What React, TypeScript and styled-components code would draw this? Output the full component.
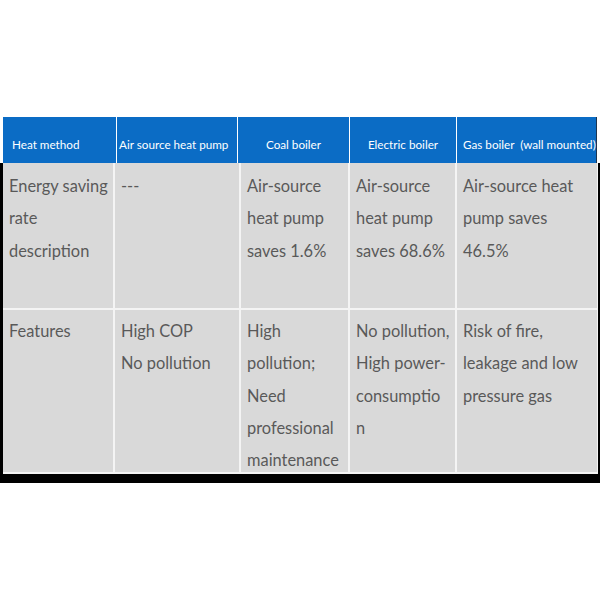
import React from "react";
import styled, { createGlobalStyle } from "styled-components";

const GlobalStyle = createGlobalStyle`
  html, body {
    margin: 0;
    padding: 0;
    background: #ffffff;
  }
  body {
    font-family: Lato, "Liberation Sans", sans-serif;
  }
`;

const Page = styled.div`
  width: 600px;
  height: 600px;
  padding-top: 117px;
  box-sizing: border-box;
`;

const HeaderRow = styled.div`
  display: grid;
  grid-template-columns: 113px 120px 111px 106px 139px;
  column-gap: 1px;
  margin-left: 3px;
  width: 594px;
  height: 46px;
  background: #ffffff;
  border-right: 2px solid #1d3550;
  box-sizing: border-box;
`;

const HeadCell = styled.div<{ $center?: boolean; $pad: number }>`
  background: #0b6cc5;
  color: #ffffff;
  font-size: 11.7px;
  display: flex;
  align-items: center;
  justify-content: ${(p) => (p.$center ? "center" : "flex-start")};
  padding: 7px 0 0 ${(p) => p.$pad}px;
  white-space: nowrap;
  overflow: hidden;
  box-sizing: border-box;
`;

const BodyFrame = styled.div`
  background: #000000;
  padding: 0 2px 9px 3px;
  width: 600px;
  box-sizing: border-box;
`;

const BodyGrid = styled.div`
  display: grid;
  grid-template-columns: 110px 124px 107px 105px 140px;
  grid-template-rows: 145px 162px;
  gap: 2px;
  padding-bottom: 2px;
  background: #f4f4f4;
`;

const Cell = styled.div<{ $top: number }>`
  background: #d9d9d9;
  color: #595959;
  font-size: 16.4px;
  line-height: 32.3px;
  padding: ${(p) => p.$top}px 0 0 6px;
  box-sizing: border-box;
  overflow: hidden;
`;

const Line = styled.div`
  white-space: nowrap;
`;

const headers = [
  { label: "Heat method", pad: 9 },
  { label: "Air source heat pump", pad: 2 },
  { label: "Coal boiler", pad: 0, center: true },
  { label: "Electric boiler", pad: 0, center: true },
  { label: "Gas boiler  (wall mounted)", pad: 6 },
];

const rows = [
  {
    top: 7,
    cells: [
      ["Energy saving", "rate", "description"],
      ["---"],
      ["Air-source", "heat pump", "saves 1.6%"],
      ["Air-source", "heat pump", "saves 68.6%"],
      ["Air-source heat", "pump saves", "46.5%"],
    ],
  },
  {
    top: 5,
    cells: [
      ["Features"],
      ["High COP", "No pollution"],
      ["High", "pollution;", "Need", "professional", "maintenance"],
      ["No pollution,", "High power-", "consumptio", "n"],
      ["Risk of fire,", "leakage and low", "pressure gas"],
    ],
  },
];

export default function App() {
  return (
    <>
      <GlobalStyle />
      <Page>
        <HeaderRow>
          {headers.map((h) => (
            <HeadCell key={h.label} $center={h.center} $pad={h.pad}>
              {h.label.replace(/ {2}/g, "\u00a0 ")}
            </HeadCell>
          ))}
        </HeaderRow>
        <BodyFrame>
          <BodyGrid>
            {rows.map((row, ri) =>
              row.cells.map((lines, ci) => (
                <Cell key={`${ri}-${ci}`} $top={row.top}>
                  {lines.map((l, li) => (
                    <Line key={li}>{l}</Line>
                  ))}
                </Cell>
              ))
            )}
          </BodyGrid>
        </BodyFrame>
      </Page>
    </>
  );
}
